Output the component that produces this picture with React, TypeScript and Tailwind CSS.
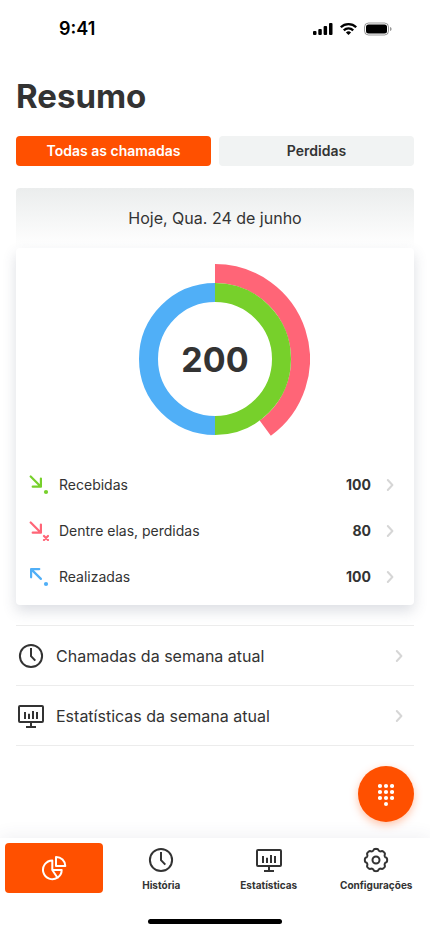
import { ReactNode } from 'react';
import clsx from 'clsx';

function ClockIcon() {
  return (
    <svg width="26" height="26" viewBox="0 0 26 26" fill="none" stroke="currentColor" strokeWidth="2" aria-hidden="true">
      <circle cx="13" cy="13" r="11.100" />
      <path d="M13 5v8.200l4.300 4.400" />
    </svg>
  );
}

function MonitorIcon() {
  return (
    <svg width="26" height="26" viewBox="0 0 26 26" fill="none" stroke="currentColor" strokeWidth="2" aria-hidden="true">
      <rect x="1" y="3" width="24" height="16" rx="1" />
      <path d="M13 19v5M8 24h10M7 9v7M11 10.700V16M15 8v8M19 9v7" />
    </svg>
  );
}

function GearIcon() {
  const points = Array.from({ length: 96 }, (_, i) => {
    const a = (i / 96) * Math.PI * 2;
    const r = 10.3 + 0.85 * Math.tanh(2 * (Math.cos(8 * a) + 0.3));
    return `${(13 + r * Math.sin(a)).toFixed(2)},${(13 - r * Math.cos(a)).toFixed(2)}`;
  });
  return (
    <svg width="26" height="26" viewBox="0 0 26 26" fill="none" stroke="currentColor" strokeWidth="2" strokeLinejoin="round" aria-hidden="true">
      <polygon points={points.join(' ')} />
      <circle cx="13" cy="13" r="3.500" />
    </svg>
  );
}

function PieIcon() {
  return (
    <svg width="26" height="26" viewBox="0 0 26 26" fill="none" stroke="currentColor" strokeWidth="2" strokeLinejoin="round" aria-hidden="true">
      <path d="M11.300 5.400A9.400 9.400 0 1 0 16.500 22.700L11.300 15Z" />
      <path d="M11.300 15h9.400a9.400 9.400 0 0 1-4.200 7.700" />
      <path d="M15 2v9h9.300A9.200 9.200 0 0 0 15 2Z" />
    </svg>
  );
}

function Chevron() {
  return (
    <svg
      width="8"
      height="14"
      viewBox="0 0 8 14"
      fill="none"
      stroke="#d6d6d6"
      strokeWidth="2"
      strokeLinecap="round"
      strokeLinejoin="round"
      className="shrink-0"
      aria-hidden="true"
    >
      <path d="m1.800 2 4.600 5-4.600 5" />
    </svg>
  );
}

type CallKind = 'received' | 'missed' | 'made';

function CallIcon({ kind }: { kind: CallKind }) {
  return (
    <svg
      width="20"
      height="20"
      viewBox="0 0 20 20"
      fill="none"
      stroke="currentColor"
      strokeWidth="2.200"
      strokeLinecap="round"
      strokeLinejoin="round"
      className={clsx(
        'shrink-0',
        kind === 'received' && 'text-[#77d02b]',
        kind === 'missed' && 'text-[#ff6577]',
        kind === 'made' && 'text-[#50aff7]',
      )}
      aria-hidden="true"
    >
      {kind === 'made' ? (
        <path d="M2.100 10.300V2.100h8.200M2.100 2.100l9.800 9.800" />
      ) : (
        <path d="M11.900 3.500v8.200H3.700M1.700 1.500l10.200 10.200" />
      )}
      {kind === 'missed' ? (
        <path d="m15 15 4 4m0-4-4 4" />
      ) : (
        <circle cx="17" cy="17" r="2.100" fill="currentColor" stroke="none" />
      )}
    </svg>
  );
}

function StatusBar() {
  return (
    <div className="flex h-[58px] items-center justify-between pl-[59px] pr-[38px] text-black">
      <span className="text-lg font-semibold">9:41</span>
      <svg width="79" height="14" viewBox="0 0 79 14" fill="currentColor" aria-hidden="true">
        <rect x="0" y="9" width="3.500" height="4" rx="1" />
        <rect x="5.300" y="7" width="3.500" height="6" rx="1" />
        <rect x="10.600" y="4" width="3.500" height="9" rx="1" />
        <rect x="16" y="1" width="3.500" height="12" rx="1" />
        <g fill="none" stroke="currentColor" strokeWidth="2.300">
          <path d="M27.800 5.300a11 11 0 0 1 15.400 0" />
          <path d="M30.800 8.400a6.700 6.700 0 0 1 9.400 0" />
        </g>
        <path d="M35.500 13 32.900 10.400a3.800 3.800 0 0 1 5.200 0Z" />
        <rect x="51.500" y="1" width="24" height="12" rx="4" fill="none" stroke="currentColor" opacity=".4" />
        <rect x="53" y="2.500" width="21" height="9" rx="2.500" />
        <path d="M77 5v4c1-.3 1.600-1 1.600-2S78 5.300 77 5Z" opacity=".4" />
      </svg>
    </div>
  );
}

function CallsChart() {
  return (
    <div className="relative mx-auto size-[190px]">
      <svg width="190" height="190" viewBox="0 0 190 190" fill="none" strokeWidth="19" aria-hidden="true">
        <path d="M95 28.500a66.500 66.500 0 0 0 0 133" stroke="#50aff7" />
        <path d="M95 9.500a85.500 85.500 0 0 1 50.256 154.671" stroke="#ff6577" />
        <path d="M95 28.500a66.500 66.500 0 0 1 0 133" stroke="#77d02b" />
      </svg>
      <strong className="absolute inset-0 flex items-center justify-center text-[34px] font-bold">200</strong>
    </div>
  );
}

const calls: { kind: CallKind; label: string; count: number }[] = [
  { kind: 'received', label: 'Recebidas', count: 100 },
  { kind: 'missed', label: 'Dentre elas, perdidas', count: 80 },
  { kind: 'made', label: 'Realizadas', count: 100 },
];

function WeekLink({ icon, children }: { icon: ReactNode; children: ReactNode }) {
  return (
    <li className="border-b border-[#ececec]">
      <a href="#semana" className="flex h-[59px] items-center gap-3 pr-[11px] pl-0.5 text-base">
        {icon}
        <span className="flex-1">{children}</span>
        <Chevron />
      </a>
    </li>
  );
}

function NavItem({ icon, label }: { icon: ReactNode; label: string }) {
  return (
    <a href="#nav" className="flex flex-col items-center gap-1 pt-1 text-[10px] leading-4 font-bold">
      {icon}
      {label}
    </a>
  );
}

export default function App() {
  return (
    <div className="flex min-h-screen flex-col bg-white font-['Inter','Liberation_Sans',sans-serif] text-[#333333]">
      <StatusBar />
      <main className="flex-1 px-4">
        <h1 className="pt-3.5 text-[33px] leading-12 font-bold">Resumo</h1>
        <div className="mt-4 grid grid-cols-2 gap-2 text-sm font-semibold">
          <button type="button" aria-pressed="true" className="h-[30px] rounded bg-[#ff5000] text-white">
            Todas as chamadas
          </button>
          <button type="button" aria-pressed="false" className="h-[30px] rounded bg-[#f1f3f3]">
            Perdidas
          </button>
        </div>

        <section className="mt-[22px]">
          <h2 className="flex h-[60px] items-center justify-center rounded-t bg-linear-to-b from-[#ebeded] to-white text-base">
            Hoje, Qua. 24 de junho
          </h2>
          <div className="rounded bg-white pt-4 pb-[5px] shadow-[0_6px_14px_#3c46642e]">
            <CallsChart />
            <ul className="mt-2">
              {calls.map((call) => (
                <li key={call.kind}>
                  <a href="#chamadas" className="flex h-[46px] items-center pr-5 pl-[13px] text-sm">
                    <CallIcon kind={call.kind} />
                    <span className="ml-2.5 flex-1">{call.label}</span>
                    <strong className="mr-[15px] font-bold">{call.count}</strong>
                    <Chevron />
                  </a>
                </li>
              ))}
            </ul>
          </div>
        </section>

        <ul className="mt-5 border-t border-[#ececec]">
          <WeekLink icon={<ClockIcon />}>Chamadas da semana atual</WeekLink>
          <WeekLink icon={<MonitorIcon />}>Estatísticas da semana atual</WeekLink>
        </ul>
      </main>

      <footer className="sticky bottom-0 bg-white shadow-[0_-2px_16px_#3c466414]">
        <button
          type="button"
          aria-label="Teclado"
          className="absolute right-4 bottom-full mb-4 flex size-14 items-center justify-center rounded-full bg-[#ff5000] text-white shadow-[0_3px_8px_#ff500059]"
        >
          <svg width="16" height="24" viewBox="0 0 16 24" fill="currentColor" aria-hidden="true">
            {[4, 10, 16].map((y) => [2, 8, 14].map((x) => <circle key={`${x}-${y}`} cx={x} cy={y} r="2.100" />))}
            <circle cx="8" cy="22" r="2" />
          </svg>
        </button>
        <nav className="grid h-[60px] grid-cols-4 pt-[5px]">
          <div className="px-[5px]">
            <a
              href="#resumo"
              aria-label="Resumo"
              aria-current="page"
              className="flex h-[50px] items-center justify-center rounded bg-[#ff5000] text-white"
            >
              <PieIcon />
            </a>
          </div>
          <NavItem icon={<ClockIcon />} label="História" />
          <NavItem icon={<MonitorIcon />} label="Estatísticas" />
          <NavItem icon={<GearIcon />} label="Configurações" />
        </nav>
        <div className="flex h-[34px] items-end justify-center pb-2">
          <div className="h-[5px] w-[134px] rounded-full bg-black" />
        </div>
      </footer>
    </div>
  );
}
